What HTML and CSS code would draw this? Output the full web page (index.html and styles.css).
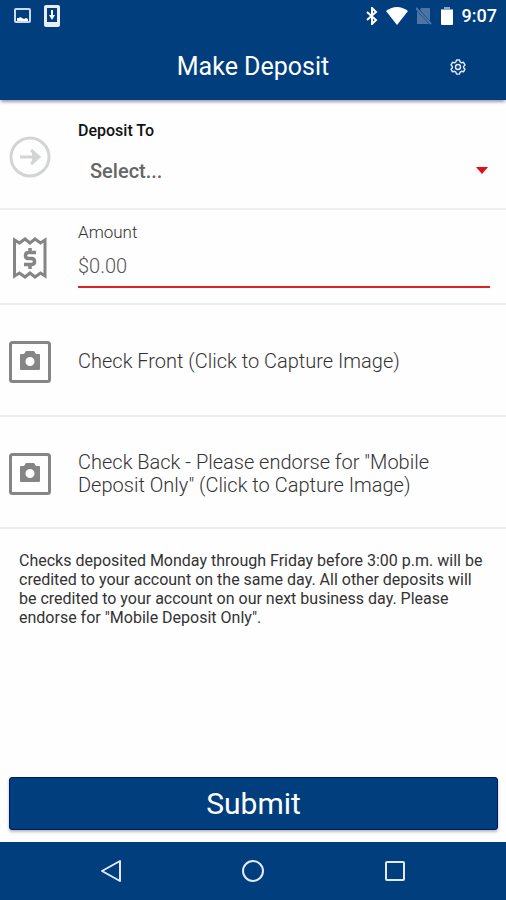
FILE: index.html
```html
<!DOCTYPE html>
<html lang="en">
<head>
<meta charset="utf-8">
<meta name="viewport" content="width=device-width, initial-scale=1">
<title>Make Deposit</title>
<link rel="stylesheet" href="styles.css">
</head>
<body>
<div class="screen">
  <div class="status-bar">
    <div class="status-group status-left">
      <svg width="18" height="18" viewBox="0 0 18 18" aria-hidden="true"><rect x="1" y="2" width="15" height="13" rx="1" fill="none" stroke="#cfd9ee" stroke-width="2"/><path d="M3 14v-3h2l1-1 2 1 2 1 2-1 2 1v2z" fill="#fff"/></svg>
      <svg width="16" height="22" viewBox="0 0 16 22" aria-hidden="true"><path fill="#e8edf8" fill-rule="evenodd" d="M2 0h12a2 2 0 0 1 2 2v18a2 2 0 0 1-2 2H2a2 2 0 0 1-2-2V2a2 2 0 0 1 2-2zM3 3v14h10V3z"/><path fill="#fff" d="M7 5h2v5h2l-3 5-3-5h2z"/></svg>
    </div>
    <div class="status-group status-right">
      <svg width="12" height="18" viewBox="0 0 12 18" fill="none" stroke="#fff" stroke-width="2" aria-hidden="true"><path d="M1 5l9 8-4 4V1l4 4-9 8"/></svg>
      <svg width="22" height="18" viewBox="0 0 22 18" aria-hidden="true"><path fill="#fff" d="M0 4Q11-4 22 4L11 18z"/></svg>
      <svg width="16" height="18" viewBox="0 0 16 18" aria-hidden="true"><path fill="#4d75a3" d="M5 1h9v13L4 3zM1 4l12 13H1z"/><path d="M0 1l15 16" stroke="#4d75a3" stroke-width="2"/></svg>
      <svg width="14" height="20" viewBox="0 0 14 20" aria-hidden="true"><path fill="#8ba6c6" d="M4 1h6v2h3v3H1V3h3z"/><path fill="#fff" d="M1 4h12v14a1 1 0 0 1-1 1H2a1 1 0 0 1-1-1z"/></svg>
      <span class="clock">9:07</span>
    </div>
  </div>

  <header class="app-header">
    <h1 class="title">Make Deposit</h1>
    <button class="settings" type="button" aria-label="Settings">
      <svg width="16" height="16" viewBox="0 0 16 16" fill="none" stroke="#e3e9f6" aria-hidden="true"><path stroke-width="1.400" stroke-linejoin="round" d="M6.500 1h3l.6 2 1.400.8 2-.5 1.500 2.600L13.600 7.400v1.400L15 10.200l-1.500 2.600-2-.5-1.400.8-.6 2h-3l-.6-2-1.400-.8-2 .5L1 10.200l1.400-1.400V7.400L1 5.900l1.500-2.600 2 .5L5.900 3z"/><circle cx="8" cy="8" r="2.500" stroke-width="1.400"/></svg>
    </button>
  </header>

  <form class="deposit">
    <div class="row row-account">
      <svg class="icon" width="42" height="42" viewBox="0 0 42 42" fill="none" stroke="#d3d5d5" aria-hidden="true"><circle cx="21" cy="21" r="19" stroke-width="3"/><path d="M11 21h17" stroke-width="3"/><path d="M22 14l8 7-8 7" stroke-width="3"/><path d="M23 16v10l6-5z" fill="#d3d5d5" stroke="none"/></svg>
      <div class="field">
        <label class="label label-strong" for="account">Deposit To</label>
        <div class="select-wrap">
          <select class="select" id="account"><option>Select...</option></select>
          <svg class="caret" width="12" height="7" viewBox="0 0 12 7" aria-hidden="true"><path fill="#dc1212" d="M0 0h12L6 7z"/></svg>
        </div>
      </div>
    </div>

    <div class="row row-amount">
      <svg class="icon" width="42" height="42" viewBox="0 0 42 42" fill="none" stroke="#858585" aria-hidden="true"><path stroke-width="3" d="M5.500 3v36l5-3 5.500 4 5-4 5 4 5.500-4 4.500 3V3l-4.500 3L26 2l-5 4-5-4-5.500 4z"/><path stroke-width="3.500" d="M27 15.500h-7.500q-3 0-3 3t3 3h3q3 0 3 3t-3 3H15M21 11v5M21 27v5"/></svg>
      <div class="field field-amount">
        <label class="label" for="amount">Amount</label>
        <input class="amount" id="amount" type="text" inputmode="decimal" placeholder="$0.00">
      </div>
    </div>

    <button class="row row-capture" type="button">
      <svg class="icon" width="42" height="42" viewBox="0 0 42 42" aria-hidden="true"><rect x="1.500" y="1.500" width="39" height="39" rx="2" fill="none" stroke="#858585" stroke-width="3"/><path fill="#858585" fill-rule="evenodd" d="M17 10h8l2 3h3a1 1 0 0 1 1 1v14a1 1 0 0 1-1 1H12a1 1 0 0 1-1-1V14a1 1 0 0 1 1-1h3zM21 16a4.500 4.500 0 1 0 0 9 4.500 4.500 0 0 0 0-9z"/></svg>
      <span class="capture-text">Check Front (Click to Capture Image)</span>
    </button>

    <button class="row row-capture" type="button">
      <svg class="icon" width="42" height="42" viewBox="0 0 42 42" aria-hidden="true"><rect x="1.500" y="1.500" width="39" height="39" rx="2" fill="none" stroke="#858585" stroke-width="3"/><path fill="#858585" fill-rule="evenodd" d="M17 10h8l2 3h3a1 1 0 0 1 1 1v14a1 1 0 0 1-1 1H12a1 1 0 0 1-1-1V14a1 1 0 0 1 1-1h3zM21 16a4.500 4.500 0 1 0 0 9 4.500 4.500 0 0 0 0-9z"/></svg>
      <span class="capture-text">Check Back - Please endorse for "Mobile Deposit Only" (Click to Capture Image)</span>
    </button>

    <p class="note">Checks deposited Monday through Friday before 3:00 p.m. will be credited to your account on the same day. All other deposits will be credited to your account on our next business day. Please endorse for "Mobile Deposit Only".</p>

    <button class="submit" type="submit">Submit</button>
  </form>

  <nav class="nav-bar" aria-label="System">
    <button class="nav-button" type="button" aria-label="Back"><svg width="24" height="24" viewBox="0 0 24 24" fill="none" stroke="#e3e9f8" stroke-width="2" stroke-linejoin="round"><path d="M21 2v20L3 12z"/></svg></button>
    <button class="nav-button" type="button" aria-label="Home"><svg width="24" height="24" viewBox="0 0 24 24" fill="none" stroke="#e3e9f8" stroke-width="2"><circle cx="12" cy="12" r="10"/></svg></button>
    <button class="nav-button" type="button" aria-label="Recent apps"><svg width="24" height="24" viewBox="0 0 24 24" fill="none" stroke="#e3e9f8" stroke-width="2"><rect x="3" y="3" width="18" height="18" rx="1"/></svg></button>
  </nav>
</div>
</body>
</html>
```
FILE: styles.css
```css
* {
  box-sizing: border-box;
}

body {
  margin: 0;
  font-family: Roboto, "Liberation Sans", sans-serif;
  color: #333;
  background: #fefefe;
}

button,
input,
select {
  font: inherit;
  color: inherit;
  background: none;
  border: 0;
  border-radius: 0;
  margin: 0;
  padding: 0;
}

svg {
  display: block;
  flex: none;
}

.screen {
  display: flex;
  flex-direction: column;
  min-height: 100vh;
}

.status-bar {
  display: flex;
  justify-content: space-between;
  align-items: center;
  height: 32px;
  padding: 0 9px 0 14px;
  background: #003e7e;
}

.status-group {
  display: flex;
  align-items: center;
}

.status-left {
  gap: 12px;
}

.status-right {
  gap: 8px;
}

.clock {
  font-size: 18px;
  font-weight: 500;
  line-height: 20px;
  color: #fff;
}

.app-header {
  display: grid;
  grid-template-columns: 1fr auto 1fr;
  align-items: center;
  height: 68px;
  padding: 2px 40px 0;
  background: #003e7e;
  box-shadow: 0 3px 3px -1px #9a9ab8;
}

.title {
  grid-column: 2;
  margin: 0;
  font-size: 25px;
  font-weight: 400;
  line-height: 32px;
  color: #fff;
}

.settings {
  justify-self: end;
}

.deposit {
  display: flex;
  flex: 1;
  flex-direction: column;
}

.row {
  display: flex;
  align-items: center;
  gap: 27px;
  width: 100%;
  padding: 3px 16px 0 9px;
  border-bottom: 2px solid #eee;
  text-align: left;
}

.row-account {
  min-height: 110px;
  padding-top: 5px;
}

.row-amount {
  min-height: 95px;
}

.row-capture {
  min-height: 112px;
}

.field {
  display: flex;
  flex: 1;
  flex-direction: column;
}

.field-amount {
  padding-bottom: 6px;
}

.label {
  font-size: 17px;
  font-weight: 300;
  line-height: 20px;
}

.label-strong {
  font-size: 16px;
  font-weight: 500;
  color: #111;
}

.select-wrap {
  display: grid;
  align-items: center;
  margin-top: 8px;
}

.select {
  grid-area: 1 / 1;
  height: 44px;
  padding: 0 24px 0 12px;
  appearance: none;
  font-size: 20px;
  font-weight: 500;
  color: #666;
}

.caret {
  grid-area: 1 / 1;
  justify-self: end;
  margin-right: 2px;
  pointer-events: none;
}

.amount {
  width: 100%;
  height: 46px;
  padding-top: 4px;
  border-bottom: 2px solid #d22;
  font-size: 20px;
  font-weight: 300;
}

.amount::placeholder {
  color: #555;
  opacity: 1;
}

.capture-text {
  flex: 1;
  padding-right: 40px;
  font-size: 20px;
  font-weight: 300;
  line-height: 23px;
}

.note {
  margin: 22px 18px 22px 19px;
  font-size: 16px;
  line-height: 19px;
}

.submit {
  height: 53px;
  margin: auto 8px 12px 9px;
  border-radius: 3px;
  border: 1px solid #00186a;
  background: #003e7e;
  box-shadow: 0 2px 3px #bbb;
  font-size: 30px;
  color: #fff;
}

.nav-bar {
  display: flex;
  justify-content: center;
  height: 58px;
  background: #003e7e;
}

.nav-button {
  display: flex;
  justify-content: center;
  align-items: center;
  width: 28%;
}
```
